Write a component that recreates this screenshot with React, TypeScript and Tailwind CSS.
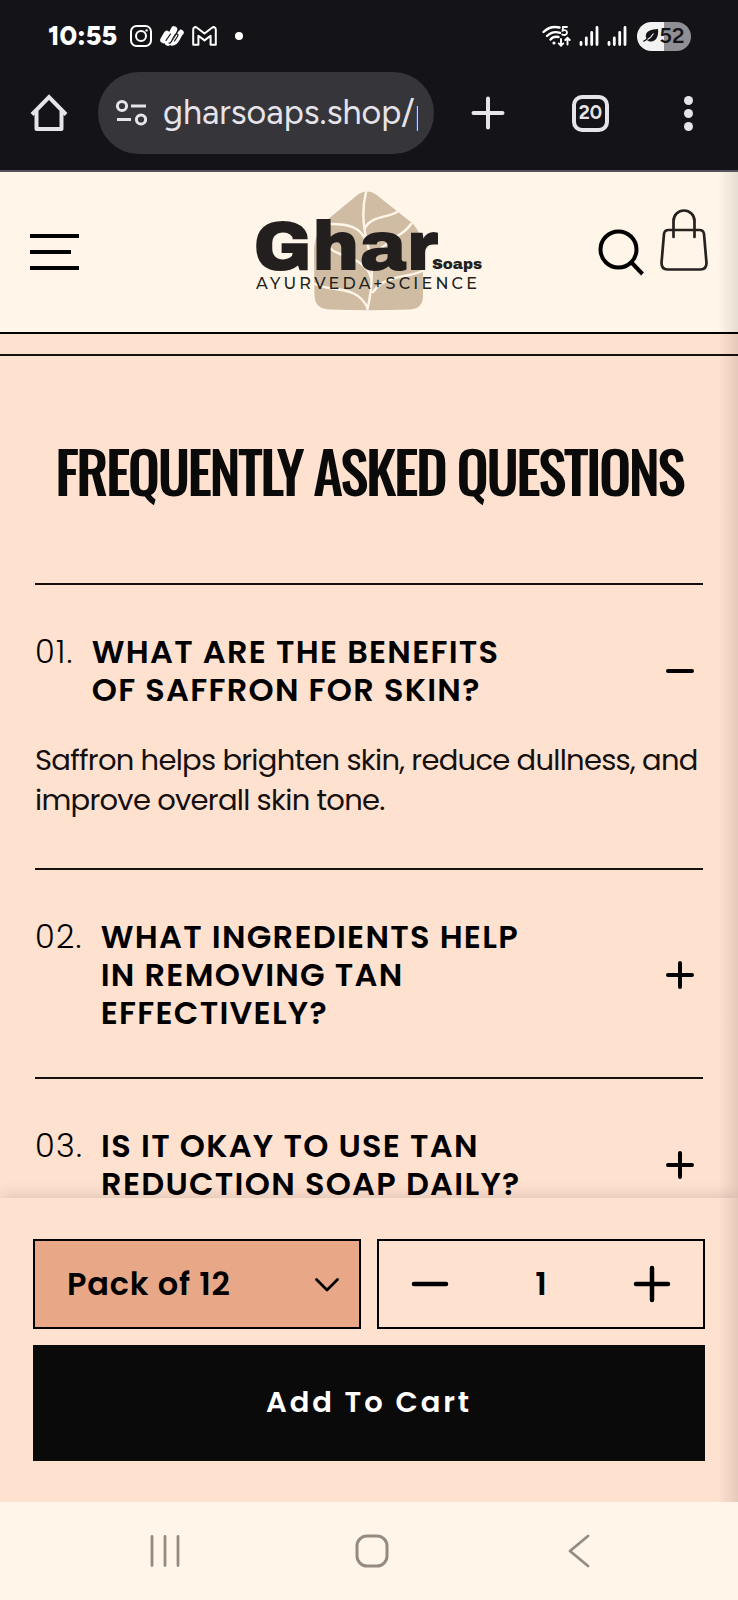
import { useState } from "react";

function StatusBar() {
  return (
    <div className="flex h-[72px] items-center justify-between pl-12 pr-[47px] text-white">
      <div className="flex items-center gap-2">
        <span className="w-[74px] font-['Figtree',sans-serif] text-[27px] leading-8 font-extrabold">10:55</span>
        <svg width="22" height="22" viewBox="0 0 22 22" fill="none" stroke="currentColor" strokeWidth="2" aria-hidden="true">
          <rect x="1" y="1" width="20" height="20" rx="5.5" />
          <circle cx="11" cy="11" r="5" />
          <circle cx="16.6" cy="5.4" r="1.2" fill="currentColor" stroke="none" />
        </svg>
        <svg width="24" height="22" viewBox="0 0 24 22" fill="none" stroke="currentColor" strokeLinecap="round" aria-hidden="true">
          <path d="M3.500 15 L7 9" strokeWidth="6.500" />
          <path d="M8 17.500 L14 4.500" strokeWidth="6.500" />
          <path d="M12 18 C17 18 17 12 21 7.500" strokeWidth="5.500" />
          <path d="M6 15.500 L10.500 9 M9 18 C12 18.500 12 14 14.500 10.500 C16.500 7.500 19 9 17.500 11.500 L14.500 16" stroke="#141318" strokeWidth="1.200" />
        </svg>
        <svg width="25" height="20" viewBox="0 0 25 20" fill="none" stroke="currentColor" strokeWidth="2" strokeLinejoin="round" aria-hidden="true">
          <path d="M1.200 3.500 C1.200 1 3.600 .6 5 1.800 L12.500 7.500 L20 1.800 C21.400 .6 23.800 1 23.800 3.500 V18.800 H18.600 V9.800 L12.500 14.400 L6.400 9.800 V18.800 H1.200 Z" />
        </svg>
        <span className="ml-2.5 size-2 rounded-full bg-white" />
      </div>
      <div className="flex items-center gap-2">
        <svg width="29" height="22" viewBox="0 0 29 22" fill="none" stroke="currentColor" strokeWidth="2.400" strokeLinecap="round" aria-hidden="true">
          <path d="M1.500 7 C6 2.500 12 1.200 17.500 2.500" />
          <path d="M5 11 C8.500 7.500 13 6.300 18 7.800" />
          <path d="M8.500 14.500 C10.500 12 13.500 11.300 16.500 12" />
          <circle cx="12" cy="18" r="1.600" fill="currentColor" stroke="none" />
          <path d="M25 2 H21 L20.600 5.600 C23 4.600 25.200 5.600 25 7.800 C24.800 10 22 10.600 20.200 9.400" strokeWidth="1.800" />
          <path d="M19 14 V20.500 M16.800 18.400 L19 20.700 L21.200 18.400 M25.500 19.500 V13 M23.300 15 L25.500 12.800 L27.700 15" strokeWidth="1.900" />
        </svg>
        <div className="flex gap-2 pr-0.5">
          <Signal />
          <Signal />
        </div>
        <div className="flex h-[29px] w-[54px] items-center justify-center rounded-full bg-linear-to-r from-[#f2f2f2] from-50% to-[#908f94] to-50% text-[#141318]">
          <svg width="16" height="16" viewBox="0 0 16 16" fill="currentColor" aria-hidden="true">
            <path d="M15 1 C16 8 13 13.500 8 13.500 C6 13.500 4.800 12.800 4 12 C2.800 12.800 1.800 13.500 .5 14 L.3 12.500 C2 11.700 3 11 3.400 10.500 C1 4.500 6.500 1 15 1 Z" />
            <path d="M4.500 11.500 C6.500 10.500 9 8 10.500 5.500" stroke="#f2f2f2" strokeWidth="1.100" fill="none" />
          </svg>
          <span className="font-['Figtree',sans-serif] text-[22px] leading-6 font-semibold">52</span>
        </div>
      </div>
    </div>
  );
}

function Signal() {
  return (
    <svg width="20" height="20" viewBox="0 0 20 20" stroke="currentColor" strokeWidth="2.800" strokeLinecap="round" aria-hidden="true">
      <path d="M2 16.500 V18.500 M7.300 12 V18.500 M12.700 6.500 V18.500 M18 1.500 V18.500" />
    </svg>
  );
}

function BrowserBar() {
  return (
    <div className="flex h-[100px] items-start border-b-2 border-[#55545a] text-[#e6e3ea]">
      <button type="button" aria-label="Home" className="flex h-[82px] w-[98px] items-center justify-center">
        <svg width="38" height="38" viewBox="0 0 38 38" fill="none" stroke="currentColor" strokeWidth="4" strokeLinejoin="round" aria-hidden="true">
          <path d="M2 20.500 L19 3 L36 20.500" strokeLinejoin="miter" />
          <path d="M6.500 17 V35 H31.500 V17" />
        </svg>
      </button>
      <div className="flex h-[82px] min-w-0 flex-1 items-center gap-4 rounded-full bg-[#36353a] pr-4 pl-[17px]">
        <svg width="32" height="28" viewBox="0 0 32 28" fill="none" stroke="currentColor" strokeWidth="3" className="shrink-0" aria-hidden="true">
          <circle cx="7" cy="7" r="4.600" />
          <circle cx="26" cy="20.500" r="4.600" />
          <path d="M16 7 H31 M2 20.500 H16" />
        </svg>
        <span className="min-w-0 flex-1 overflow-hidden font-['Figtree',sans-serif] text-[34px] leading-[44px] whitespace-nowrap">gharsoaps.shop/p</span>
      </div>
      <button type="button" aria-label="New tab" className="flex h-[82px] w-[108px] items-center justify-center">
        <svg width="34" height="34" viewBox="0 0 34 34" fill="none" stroke="currentColor" strokeWidth="4" strokeLinecap="round" aria-hidden="true">
          <path d="M17 2.500 V31.500 M2.500 17 H31.500" />
        </svg>
      </button>
      <button type="button" aria-label="Switch tabs" className="flex h-[82px] w-[97px] items-center justify-center">
        <span className="flex size-[37px] items-center justify-center rounded-[10px] border-4 border-[#e6e3ea] font-['Figtree',sans-serif] text-[19px] leading-5 font-bold">20</span>
      </button>
      <button type="button" aria-label="More options" className="flex h-[82px] w-[99px] flex-col items-center justify-center gap-1">
        <span className="size-[9px] rounded-full bg-[#e6e3ea]" />
        <span className="size-[9px] rounded-full bg-[#e6e3ea]" />
        <span className="size-[9px] rounded-full bg-[#e6e3ea]" />
      </button>
    </div>
  );
}

function Logo() {
  return (
    <svg width="260" height="140" viewBox="0 0 260 140" role="img" aria-label="Ghar Soaps Ayurveda and Science">
      <path d="M119 14.500 C125 10.500 131 10.500 137 14.500 L173 43 C181 51 183 60 183.500 72 L184 116 C184 125 179 129 170 129.500 Q128 131 92 129.500 C80 129 76 125 75.500 115 L75 72 C75 57 81 47 88 40 Z" fill="#cfbca3" />
      <g fill="none" stroke="#fff6e9" strokeWidth="2.400" strokeLinecap="round">
        <path d="M127 12 C123 28 124 46 128 62 C132 78 136 96 128.500 129" />
        <path d="M126 48 C132 36 148 38 158 32" />
        <path d="M92 44 C108 44 122 46 128 63" />
        <path d="M172 44 C164 56 156 55 148 64 C140 70 134 72 131 78" />
        <path d="M92 69 C98 76 128 78 132 98" />
        <path d="M183 91 C170 98 146 94 134 112" />
        <path d="M76 104 C90 112 118 104 128.500 128" />
      </g>
      <text x="14" y="90" fill="#221f1e" className="font-['Archivo_Black',sans-serif] text-[71px]">Ghar</text>
      <text x="193" y="89" fill="#221f1e" className="font-['Archivo_Black',sans-serif] text-[15px]">Soaps</text>
      <text x="17" y="109" fill="#221f1e" className="font-['Montserrat',sans-serif] text-[16px] font-medium tracking-[0.2em]">AYURVEDA+SCIENCE</text>
    </svg>
  );
}

function Header() {
  return (
    <header className="grid h-[162px] shrink-0 grid-cols-[1fr_auto_1fr] items-center border-b-2 border-black bg-[#fff6e9] px-[30px]">
      <button type="button" aria-label="Menu" className="flex w-[49px] flex-col gap-3">
        <span className="h-1 w-[49px] bg-black" />
        <span className="h-1 w-[41px] bg-black" />
        <span className="h-1 w-[49px] bg-black" />
      </button>
      <a href="#home" className="pb-1"><Logo /></a>
      <div className="flex items-center justify-end gap-4">
        <button type="button" aria-label="Search">
          <svg width="46" height="48" viewBox="0 0 46 48" fill="none" stroke="#000" strokeWidth="4" aria-hidden="true">
            <circle cx="20.500" cy="21.500" r="18" />
            <path d="M33 34 L44.500 46" />
          </svg>
        </button>
        <a href="#cart" aria-label="Cart" className="pb-6">
          <svg width="48" height="64" viewBox="0 0 48 64" fill="none" stroke="#25221f" strokeWidth="2.700" strokeLinecap="round" aria-hidden="true">
            <path d="M8.500 22 H39.500 Q43.500 22 44 26 L46.500 55 Q46.500 61.500 40.500 61.500 H7.500 Q1.500 61.500 1.500 55 L4 26 Q4.500 22 8.500 22 Z" />
            <path d="M13.500 29 V13 A10.500 10.500 0 0 1 34.500 13 V29" />
          </svg>
        </a>
      </div>
    </header>
  );
}

type Faq = { number: string; question: string; answer: string };

const faqs: Faq[] = [
  { number: "01.", question: "What are the benefits of saffron for skin?", answer: "Saffron helps brighten skin, reduce dullness, and improve overall skin tone." },
  { number: "02.", question: "What ingredients help in removing tan effectively?", answer: "" },
  { number: "03.", question: "Is it okay to use tan reduction soap daily?", answer: "" },
];

function FaqItem({ faq, open, onToggle }: { faq: Faq; open: boolean; onToggle: () => void }) {
  return (
    <div className="border-t-2 border-[#15100e] pt-12 pb-[45px]">
      <h3>
        <button type="button" aria-expanded={open} onClick={onToggle} className="flex w-full items-center justify-between pr-2 text-left text-[32px] leading-[38px] tracking-[0.04em]">
          <span className="flex items-start gap-[18px]">
            <span className="font-light">{faq.number}</span>
            <span className="max-w-[440px] font-semibold uppercase">{faq.question}</span>
          </span>
          <svg width="30" height="30" viewBox="0 0 30 30" fill="none" stroke="#000" strokeWidth="4" strokeLinecap="round" className="shrink-0" aria-hidden="true">
            <path d={open ? "M3 15 H27" : "M3 15 H27 M15 3 V27"} />
          </svg>
        </button>
      </h3>
      {open && <p className="pt-[31px] pb-[3px] text-[29px] leading-10 tracking-tight text-[#15100e]">{faq.answer}</p>}
    </div>
  );
}

function FaqSection() {
  const [openItem, setOpenItem] = useState("01.");
  return (
    <main className="min-h-0 flex-1 overflow-hidden px-[35px]">
      <h2 className="pt-[74px] pb-[73px] text-center font-['Oswald',sans-serif] text-[58px] leading-[80px] font-medium tracking-tighter whitespace-nowrap text-[#0a0a0a] uppercase">
        Frequently asked questions
      </h2>
      {faqs.map((faq) => (
        <FaqItem key={faq.number} faq={faq} open={openItem === faq.number} onToggle={() => setOpenItem(openItem === faq.number ? "" : faq.number)} />
      ))}
    </main>
  );
}

function PurchaseBar() {
  const [quantity, setQuantity] = useState(1);
  return (
    <form onSubmit={(event) => event.preventDefault()} className="grid shrink-0 grid-cols-2 gap-4 bg-[#ffe1d0] px-[33px] py-[41px] shadow-[0_0_16px_rgba(0,0,0,0.18)]">
      <div className="relative">
        <select aria-label="Pack size" defaultValue="12" className="h-[90px] w-full appearance-none border-2 border-black bg-[#e8a888] pl-8 text-[32px] font-semibold tracking-wide">
          <option value="12">Pack of 12</option>
          <option value="6">Pack of 6</option>
        </select>
        <svg width="26" height="16" viewBox="0 0 26 16" fill="none" stroke="#000" strokeWidth="2.800" strokeLinecap="round" strokeLinejoin="round" className="pointer-events-none absolute top-[38px] right-[21px]" aria-hidden="true">
          <path d="M2.500 2.500 L13 13 L23.500 2.500" />
        </svg>
      </div>
      <div className="flex h-[90px] items-center justify-between border-2 border-black px-8">
        <button type="button" aria-label="Decrease quantity" onClick={() => setQuantity(Math.max(1, quantity - 1))}>
          <svg width="38" height="38" viewBox="0 0 38 38" stroke="#000" strokeWidth="4.500" strokeLinecap="round" aria-hidden="true">
            <path d="M3 19 H35" />
          </svg>
        </button>
        <input aria-label="Quantity" inputMode="numeric" value={quantity} onChange={(event) => setQuantity(Number(event.target.value) || 1)} className="w-20 bg-transparent text-center text-[32px] font-semibold" />
        <button type="button" aria-label="Increase quantity" onClick={() => setQuantity(quantity + 1)}>
          <svg width="38" height="38" viewBox="0 0 38 38" stroke="#000" strokeWidth="4.500" strokeLinecap="round" aria-hidden="true">
            <path d="M3 19 H35 M19 3 V35" />
          </svg>
        </button>
      </div>
      <button type="submit" className="col-span-2 h-[116px] bg-[#0a0a0a] text-[29px] font-semibold tracking-widest text-white">Add To Cart</button>
    </form>
  );
}

function SystemNav() {
  return (
    <nav aria-label="System" className="relative grid h-[98px] shrink-0 grid-cols-3 items-center justify-items-center bg-[#fff6e9] pr-[56px] pl-[62px] text-[#938c83]">
      <button type="button" aria-label="Recent apps">
        <svg width="32" height="34" viewBox="0 0 32 34" stroke="currentColor" strokeWidth="2.800" strokeLinecap="round" aria-hidden="true">
          <path d="M3 2.500 V31.500 M16 2.500 V31.500 M29 2.500 V31.500" />
        </svg>
      </button>
      <button type="button" aria-label="Home screen">
        <svg width="34" height="34" viewBox="0 0 34 34" fill="none" stroke="currentColor" strokeWidth="3" aria-hidden="true">
          <rect x="2" y="2" width="30" height="30" rx="10" />
        </svg>
      </button>
      <button type="button" aria-label="Back">
        <svg width="24" height="36" viewBox="0 0 24 36" fill="none" stroke="currentColor" strokeWidth="2.800" strokeLinecap="round" strokeLinejoin="round" aria-hidden="true">
          <path d="M21 3 L3 18 L21 33" />
        </svg>
      </button>
    </nav>
  );
}

export default function App() {
  return (
    <div className="flex h-screen flex-col bg-[#ffe1d0] font-['Poppins','Inter',sans-serif] text-black">
      <div className="shrink-0 bg-[#141318]">
        <StatusBar />
        <BrowserBar />
      </div>
      <div className="relative flex min-h-0 flex-1 flex-col">
        <Header />
        <div className="h-[22px] shrink-0 border-b-2 border-[#15100e]" />
        <FaqSection />
        <PurchaseBar />
        <div className="pointer-events-none absolute inset-y-0 right-0 w-5 bg-linear-to-l from-black/10 to-transparent" />
      </div>
      <SystemNav />
    </div>
  );
}
